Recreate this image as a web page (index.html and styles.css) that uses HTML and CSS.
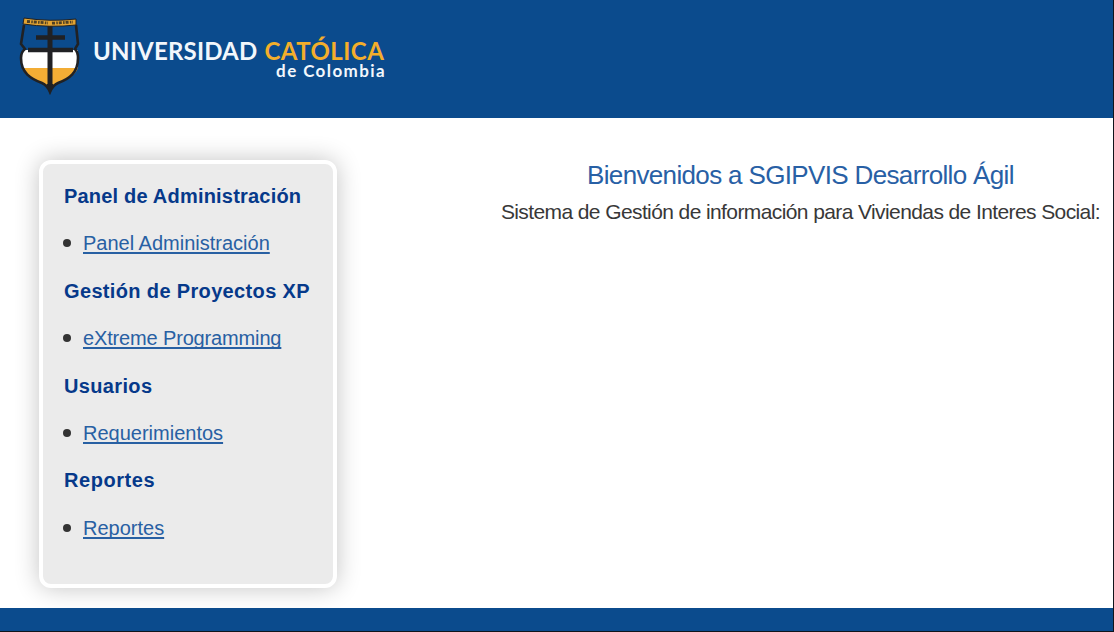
FILE: index.html
```
<!DOCTYPE html>
<html lang="es">
<head>
<meta charset="utf-8">
<title>SGIPVIS Desarrollo Ágil</title>
<link rel="stylesheet" href="styles.css">
</head>
<body>
<div class="page">
  <header class="header">
    <svg class="shield" width="64" height="80" viewBox="0 0 64 80" role="img" aria-label="Escudo">
      <path d="M6 9H58L60 28L57 34Q60 36 60 41C60 57 51 63 40 67Q35 69 32 76Q29 69 24 67C13 63 3 57 3 41Q3 36 6 34L3 28Z" fill="#0b4b8d"/>
      <path d="M4 34H60V52H4Z" fill="#fff"/>
      <path d="M4 52H60C56 61 47 65 40 67Q35 69 32 74Q29 69 24 67C15 64 7 60 4 52Z" fill="#f3ad35"/>
      <path d="M6 9L3 28L7 33Q3 36 3 42C3 57 13 63 24 67Q29 69 32 76Q35 69 40 67C51 63 60 57 60 42Q60 36 57 33L60 28L58 9" fill="none" stroke="#202124" stroke-width="2.600"/>
      <path d="M32 9V71" stroke="#202124" stroke-width="5"/>
      <path d="M28.500 68H35.500L32 78Z" fill="#202124"/>
      <path d="M18 21.500H47M10 34H55" stroke="#202124" stroke-width="4.500"/>
      <path d="M6 2Q32 6 58 3L58 9Q32 12 5 8Z" fill="#e2a332" stroke="#202124"/>
      <path d="M9 5.500L30 7M34 7.200L55 6" stroke="#4e4025" stroke-width="2.800" stroke-dasharray="3 1.300 1.500 1"/>
    </svg>
    <div class="brand">
      <div class="brand-name">UNIVERSIDAD <span class="brand-accent">CATÓLICA</span></div>
      <div class="brand-country">de Colombia</div>
    </div>
  </header>
  <div class="content">
    <nav class="panel">
      <h2 class="group group-admin">Panel de Administración</h2>
      <ul class="links"><li class="item"><a class="link" href="#">Panel Administración</a></li></ul>
      <h2 class="group">Gestión de Proyectos XP</h2>
      <ul class="links"><li class="item"><a class="link link-xp" href="#">eXtreme Programming</a></li></ul>
      <h2 class="group">Usuarios</h2>
      <ul class="links"><li class="item"><a class="link" href="#">Requerimientos</a></li></ul>
      <h2 class="group group-reports">Reportes</h2>
      <ul class="links"><li class="item"><a class="link" href="#">Reportes</a></li></ul>
    </nav>
    <main class="welcome">
      <h1 class="title">Bienvenidos a SGIPVIS Desarrollo Ágil</h1>
      <p class="subtitle">Sistema de Gestión de información para Viviendas de Interes Social:</p>
    </main>
  </div>
  <footer class="footer"></footer>
</div>
</body>
</html>
```
FILE: styles.css
```
* { box-sizing: border-box; }
body {
  margin: 0;
  background: #fff;
  font-family: "Liberation Sans", Arial, sans-serif;
  color: #383838;
}
.page {
  display: flex;
  flex-direction: column;
  height: 632px;
  overflow: hidden;
  border-right: 1px solid #10151c;
  border-bottom: 1px solid #10151c;
}
.header {
  display: flex;
  flex: none;
  height: 118px;
  padding: 16px 0 0 18px;
  background: #0b4b8d;
}
.shield { flex: none; }
.brand {
  width: 293px;
  margin: 24px 0 0 11px;
  font-family: Lato, sans-serif;
  font-weight: 700;
  color: #f2f7fc;
  white-space: nowrap;
}
.brand-name { font-size: 24px; line-height: 22px; letter-spacing: 0.200px; }
.brand-accent { margin-left: 1px; color: #f3ae2b; letter-spacing: 0.450px; }
.brand-country {
  font-size: 17px;
  line-height: 18px;
  letter-spacing: 1.400px;
  text-align: right;
}
.content {
  display: flex;
  flex: 1;
  min-height: 0;
  padding: 42px 13px 0 39px;
}
.panel {
  flex: none;
  width: 298px;
  height: 428px;
  padding: 20px 0 0 21px;
  background: #ebebeb;
  border: 4px solid #fff;
  border-radius: 12px;
  box-shadow: 0 0 24px rgba(0, 0, 0, 0.24);
}
.group {
  margin: 0;
  font-size: 20px;
  font-weight: 700;
  line-height: 24px;
  letter-spacing: 0.350px;
  color: #06398a;
  white-space: nowrap;
}
.group-admin { letter-spacing: 0.200px; }
.group-reports { letter-spacing: 0.550px; }
.links {
  margin: 23.400px 0;
  padding: 0;
  list-style: none;
  font-size: 20px;
  line-height: 24px;
  white-space: nowrap;
}
.item { display: flex; align-items: center; }
.item::before {
  content: "";
  width: 8px;
  height: 8px;
  margin: 0 12px 0 -1px;
  border-radius: 50%;
  background: #333;
}
.link {
  color: #2860a3;
  text-decoration-thickness: 1.500px;
  text-underline-offset: 2px;
  text-decoration-skip-ink: none;
}
.link-xp { letter-spacing: -0.150px; }
.welcome {
  margin-left: auto;
  text-align: center;
  white-space: nowrap;
}
.title {
  margin: 0;
  font-size: 26px;
  font-weight: 400;
  line-height: 30px;
  letter-spacing: -0.650px;
  color: #2860a5;
}
.subtitle {
  margin: 9px 0 0;
  font-size: 21px;
  line-height: 26px;
  letter-spacing: -0.600px;
}
.footer { flex: none; height: 23px; background: #0b4b8d; }
```
